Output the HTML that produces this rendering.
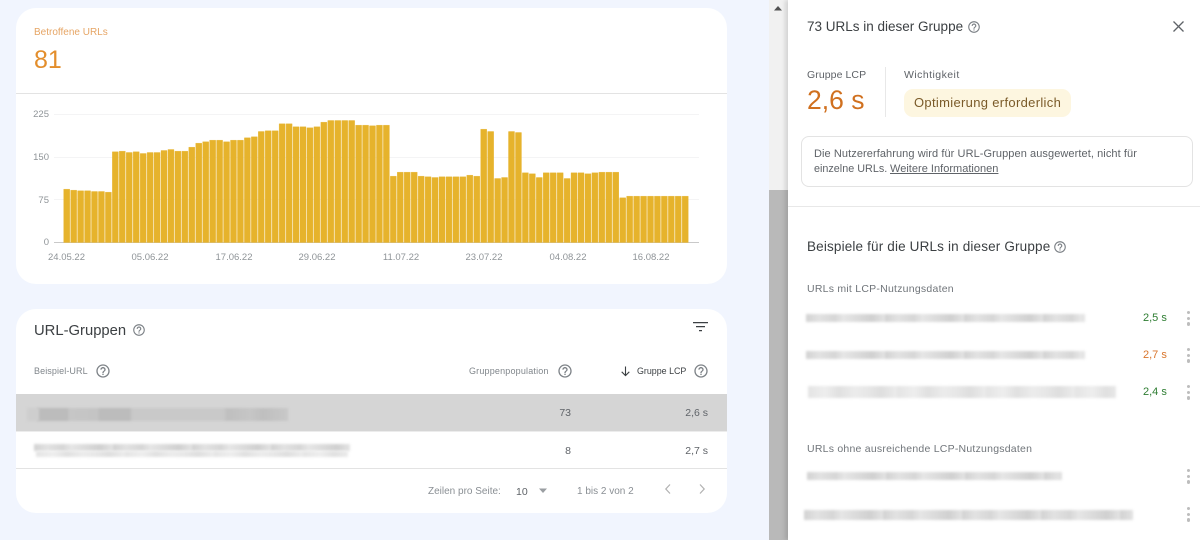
<!DOCTYPE html>
<html lang="de">
<head>
<meta charset="utf-8">
<title>URL-Gruppen</title>
<style>
*{box-sizing:border-box;margin:0;padding:0}
html,body{width:1200px;height:540px;overflow:hidden;background:#f1f5fe;font-family:"Liberation Sans",sans-serif}
body{position:relative}
.card{position:absolute;left:16px;width:711px;background:#fff;border-radius:20px;overflow:hidden}
.t{position:absolute;white-space:nowrap;line-height:16px;height:16px}
.r{text-align:right}
.l{position:absolute;height:1px}
.g{position:absolute;left:54px;width:645px;height:1px;background:#f4f4f5}
.y{color:#8f9498;font-size:9.5px;width:34px;left:15px;text-align:right}
.x{color:#8f9498;font-size:9.5px;width:60px;text-align:center}
svg{position:absolute;display:block}
.bl{position:absolute;filter:blur(1.2px)}
.dots{position:absolute;width:4px;height:16px;left:1187px}
.dots b{display:block;width:3.4px;height:3.4px;border-radius:50%;background:#bdbdbd;margin-bottom:2.2px}
.p1{background:repeating-linear-gradient(90deg,#d2d2d2 0,#e2e2e2 13px,#d6d6d6 29px,#e6e6e6 37px,#dadada 53px,#d0d0d0 66px,#e4e4e4 79px)}
.p2{background:repeating-linear-gradient(90deg,#e4e4e4 0,#eeeeee 17px,#e0e0e0 31px,#ececec 47px,#e6e6e6 61px,#dedede 73px,#ececec 89px)}
</style>
</head>
<body>
<svg width="0" height="0" style="position:absolute"><symbol id="h" viewBox="0 0 24 24"><path fill="#7d8287" d="M11 18h2v-2h-2v2zm1-16C6.48 2 2 6.48 2 12s4.48 10 10 10 10-4.48 10-10S17.52 2 12 2zm0 18c-4.41 0-8-3.59-8-8s3.59-8 8-8 8 3.59 8 8-3.59 8-8 8zm0-14c-2.21 0-4 1.79-4 4h2c0-1.1.9-2 2-2s2 .9 2 2c0 2-3 1.75-3 5h2c0-2.25 3-2.5 3-5 0-2.21-1.79-4-4-4z"/></symbol></svg>

<div class="card" style="top:8px;height:276px"></div>
<div class="l" style="left:16px;top:93px;width:711px;background:#e3e3e3"></div>
<span class="t" style="left:34px;top:25px;font-size:10px;color:#e6a565">Betroffene URLs</span>
<span class="t" style="left:34px;top:52px;font-size:25px;color:#e38e2c">81</span>

<div class="g" style="top:114px"></div>
<div class="g" style="top:157px"></div>
<div class="g" style="top:199px"></div>
<div class="l" style="left:54px;top:242px;width:645px;background:#c9c9c9"></div>
<span class="t y" style="top:107px">225</span>
<span class="t y" style="top:150px">150</span>
<span class="t y" style="top:193px">75</span>
<span class="t y" style="top:235px">0</span>
<svg style="left:0;top:0" width="760" height="260"><path fill="#e6b32c" stroke="#e6b32c" stroke-width=".35" d="M63.7 242.5v-53.3h6v53.3zm6.95 0v-52.3h6v52.3zm6.95 0v-51.7h6v51.7zm6.95 0v-51.7h6v51.7zm6.95 0v-51h6v51zm6.95 0v-51h6v51zm6.95 0v-50.3h6v50.3zm6.95 0v-90.7h6v90.7zm6.95 0v-91.3h6v91.3zm6.95 0v-90h6v90zm6.95 0v-90.7h6v90.7zm6.95 0v-89h6v89zm6.95 0v-90h6v90zm6.95 0v-90h6v90zm6.95 0v-92h6v92zm6.95 0v-93h6v93zm6.95 0v-91.3h6v91.3zm6.95 0v-91.3h6v91.3zm6.95 0v-95.3h6v95.3zm6.95 0v-99.3h6v99.3zm6.95 0v-100.7h6v100.7zm6.95 0v-102.3h6v102.3zm6.95 0v-102.3h6v102.3zm6.95 0v-100.7h6v100.7zm6.95 0v-102.3h6v102.3zm6.95 0v-102.3h6v102.3zm6.95 0v-104.7h6v104.7zm6.95 0v-105.7h6v105.7zm6.95 0v-111h6v111zm6.95 0v-111.7h6v111.7zm6.95 0v-111.7h6v111.7zm6.95 0v-118.7h6v118.7zm6.95 0v-118.7h6v118.7zm6.95 0v-115.7h6v115.7zm6.95 0v-115.7h6v115.7zm6.95 0v-114.7h6v114.7zm6.95 0v-115.7h6v115.7zm6.95 0v-120.3h6v120.3zm6.95 0v-122h6v122zm6.95 0v-122h6v122zm6.95 0v-122h6v122zm6.95 0v-122h6v122zm6.95 0v-117.3h6v117.3zm6.95 0v-117.3h6v117.3zm6.95 0v-116.7h6v116.7zm6.95 0v-117.3h6v117.3zm6.95 0v-117.3h6v117.3zm6.95 0v-66.3h6v66.3zm6.95 0v-70.3h6v70.3zm6.95 0v-70.3h6v70.3zm6.95 0v-70.3h6v70.3zm6.95 0v-66.3h6v66.3zm6.95 0v-65.7h6v65.7zm6.95 0v-65h6v65zm6.95 0v-65.7h6v65.7zm6.95 0v-65.7h6v65.7zm6.95 0v-65.7h6v65.7zm6.95 0v-65.7h6v65.7zm6.95 0v-67.3h6v67.3zm6.95 0v-66.3h6v66.3zm6.95 0v-113.3h6v113.3zm6.95 0v-111h6v111zm6.95 0v-64h6v64zm6.95 0v-65h6v65zm6.95 0v-111h6v111zm6.95 0v-110h6v110zm6.95 0v-69.7h6v69.7zm6.95 0v-68.7h6v68.7zm6.95 0v-65h6v65zm6.95 0v-69.7h6v69.7zm6.95 0v-69.7h6v69.7zm6.95 0v-69.7h6v69.7zm6.95 0v-64h6v64zm6.95 0v-69.7h6v69.7zm6.95 0v-69.7h6v69.7zm6.95 0v-68.7h6v68.7zm6.95 0v-69.7h6v69.7zm6.95 0v-70.3h6v70.3zm6.95 0v-70.3h6v70.3zm6.95 0v-70.3h6v70.3zm6.95 0v-44.7h6v44.7zm6.95 0v-46.3h6v46.3zm6.95 0v-46.3h6v46.3zm6.95 0v-46.3h6v46.3zm6.95 0v-46.3h6v46.3zm6.95 0v-46.3h6v46.3zm6.95 0v-46.3h6v46.3zm6.95 0v-46.3h6v46.3zm6.95 0v-46.3h6v46.3zm6.95 0v-46.3h6v46.3z"/></svg>
<span class="t x" style="left:36.500px;top:250px">24.05.22</span>
<span class="t x" style="left:120px;top:250px">05.06.22</span>
<span class="t x" style="left:204px;top:250px">17.06.22</span>
<span class="t x" style="left:287px;top:250px">29.06.22</span>
<span class="t x" style="left:371px;top:250px">11.07.22</span>
<span class="t x" style="left:454px;top:250px">23.07.22</span>
<span class="t x" style="left:538px;top:250px">04.08.22</span>
<span class="t x" style="left:621px;top:250px">16.08.22</span>

<div class="card" style="top:309px;height:204px"></div>
<span class="t" style="left:34px;top:323px;font-size:14.800px;color:#3c4043">URL-Gruppen</span>
<svg style="left:132px;top:323px" width="14" height="14"><use href="#h"/></svg>
<svg style="left:692px;top:320px" width="17" height="13" viewBox="0 0 17 13"><path fill="#3c4043" d="M1 2h15v1.300H1zM4 6h9v1.300H4zM7 10h3v1.300H7z"/></svg>
<span class="t" style="left:34px;top:363px;font-size:9px;letter-spacing:.1px;color:#80868b">Beispiel-URL</span>
<svg style="left:95px;top:363px" width="16" height="16"><use href="#h"/></svg>
<span class="t" style="left:469px;top:363px;font-size:9px;letter-spacing:.18px;color:#80868b">Gruppenpopulation</span>
<svg style="left:556.500px;top:363px" width="16" height="16"><use href="#h"/></svg>
<svg style="left:620px;top:365px" width="11" height="12" viewBox="0 0 11 12"><path fill="none" stroke="#3c4043" stroke-width="1.100" d="M5.500 1.500v9M1.700 6.800l3.800 3.800 3.800-3.800"/></svg>
<span class="t" style="left:637px;top:363px;font-size:8.900px;color:#3c4043">Gruppe LCP</span>
<svg style="left:693px;top:363px" width="16" height="16"><use href="#h"/></svg>

<div class="l" style="left:16px;top:394px;width:711px;height:37px;background:#d5d5d5"></div>
<div class="l" style="left:16px;top:431px;width:711px;background:#ececec"></div>
<div class="l" style="left:16px;top:468px;width:711px;background:#e3e3e3"></div>
<div class="bl" style="left:37px;top:408px;width:251px;height:13px;filter:blur(1px);background:linear-gradient(90deg,#bcbcbc 0,#bcbcbc 12%,#c6c6c6 13%,#c4c4c4 24%,#bcbcbc 25%,#bcbcbc 37%,#c9c9c9 38%,#c9c9c9 74%,#bfbfbf 76%,#c6c6c6 85%,#bfbfbf 90%,#c8c8c8 100%)"></div>
<div class="bl" style="left:27px;top:408px;width:12px;height:13px;background:#cecece"></div>
<span class="t r" style="left:540px;width:31px;top:405px;font-size:10.500px;color:#5f6368">73</span>
<span class="t r" style="left:660px;width:48px;top:405px;font-size:10.500px;color:#5f6368">2,6 s</span>
<div class="bl p1" style="left:34px;top:444px;width:316px;height:7px"></div>
<div class="bl p2" style="left:36px;top:451px;width:312px;height:6px"></div>
<span class="t r" style="left:540px;width:31px;top:443px;font-size:10.500px;color:#5f6368">8</span>
<span class="t r" style="left:660px;width:48px;top:443px;font-size:10.500px;color:#5f6368">2,7 s</span>

<span class="t" style="left:428px;top:484px;font-size:10px;color:#8a8f94">Zeilen pro Seite:</span>
<span class="t" style="left:516px;top:483.500px;font-size:10.500px;color:#5f6368">10</span>
<svg style="left:538px;top:488px" width="10" height="6"><path fill="#9a9ea2" d="M1 .5h8L5 5z"/></svg>
<span class="t" style="left:577px;top:484px;font-size:10px;color:#8a8f94">1 bis 2 von 2</span>
<svg style="left:664px;top:483px" width="8" height="12"><path fill="none" stroke="#b0b0b0" stroke-width="1.200" d="M6 1.500L1.800 6 6 10.500"/></svg>
<svg style="left:698px;top:483px" width="8" height="12"><path fill="none" stroke="#b0b0b0" stroke-width="1.200" d="M2 1.500L6.200 6 2 10.500"/></svg>

<div style="position:absolute;left:769px;top:0;width:19px;height:190px;background:#f1f1f1"></div>
<div style="position:absolute;left:769px;top:190px;width:19px;height:350px;background:#b9b9b9"></div>
<svg style="left:773px;top:5px" width="10" height="6"><path fill="#505050" d="M1 5.500L5 1l4 4.500z"/></svg>

<div style="position:absolute;left:788px;top:0;width:412px;height:540px;background:#fff;box-shadow:-3px 0 4px rgba(0,0,0,.12)"></div>
<span class="t" style="left:807px;top:19px;font-size:13.500px;color:#3c4043">73 URLs in dieser Gruppe</span>
<svg style="left:967px;top:20px" width="14" height="14"><use href="#h"/></svg>
<svg style="left:1172px;top:20px" width="13" height="13" viewBox="0 0 13 13"><path fill="none" stroke="#5f6368" stroke-width="1.300" d="M1.500 1.500l10 10M11.500 1.500l-10 10"/></svg>

<span class="t" style="left:807px;top:67px;font-size:10.500px;letter-spacing:.08px;color:#5f6368">Gruppe LCP</span>
<span class="t" style="left:807px;top:92px;font-size:26.500px;color:#d0701f">2,6 s</span>
<div style="position:absolute;left:885px;top:67px;width:1px;height:50px;background:#e8e8e8"></div>
<span class="t" style="left:904px;top:67px;font-size:10.500px;letter-spacing:.45px;color:#5f6368">Wichtigkeit</span>
<div style="position:absolute;left:904px;top:89px;width:167px;height:28px;border-radius:9px;background:#fdf6e0"></div>
<span class="t" style="left:914px;top:95px;font-size:13px;letter-spacing:.32px;color:#7a5a28">Optimierung erforderlich</span>
<div style="position:absolute;left:801px;top:136px;width:392px;height:51px;border:1px solid #e3e3e3;border-radius:8px"></div>
<span class="t" style="left:814px;top:146px;font-size:11px;letter-spacing:.08px;color:#5f6368">Die Nutzererfahrung wird für URL-Gruppen ausgewertet, nicht für</span>
<span class="t" style="left:814px;top:161px;font-size:10.800px;color:#5f6368">einzelne URLs.</span>
<span class="t" style="left:890px;top:161px;font-size:11px;letter-spacing:.02px;color:#5f6368;text-decoration:underline">Weitere Informationen</span>
<div class="l" style="left:788px;top:206px;width:412px;background:#e8e8e8"></div>

<span class="t" style="left:807px;top:239px;font-size:13.500px;letter-spacing:.16px;color:#3c4043">Beispiele für die URLs in dieser Gruppe</span>
<svg style="left:1053px;top:240px" width="14" height="14"><use href="#h"/></svg>
<span class="t" style="left:807px;top:281px;font-size:10.500px;letter-spacing:.24px;color:#70757a">URLs mit LCP-Nutzungsdaten</span>
<div class="bl p1" style="left:806px;top:314px;width:279px;height:8px"></div>
<span class="t" style="left:1143px;top:310px;font-size:11px;color:#2e7d32">2,5 s</span>
<div class="dots" style="top:311px"><b></b><b></b><b></b></div>
<div class="bl p1" style="left:806px;top:351px;width:279px;height:8px"></div>
<span class="t" style="left:1143px;top:347px;font-size:11px;color:#d9752c">2,7 s</span>
<div class="dots" style="top:348px"><b></b><b></b><b></b></div>
<div class="bl p2" style="left:808px;top:386px;width:308px;height:12px"></div>
<span class="t" style="left:1143px;top:384px;font-size:11px;color:#2e7d32">2,4 s</span>
<div class="dots" style="top:385px"><b></b><b></b><b></b></div>

<span class="t" style="left:807px;top:441px;font-size:10.500px;letter-spacing:.23px;color:#70757a">URLs ohne ausreichende LCP-Nutzungsdaten</span>
<div class="bl p1" style="left:807px;top:472px;width:255px;height:8px"></div>
<div class="dots" style="top:469px"><b></b><b></b><b></b></div>
<div class="bl p1" style="left:804px;top:510px;width:329px;height:10px"></div>
<div class="dots" style="top:507px"><b></b><b></b><b></b></div>
</body>
</html>
